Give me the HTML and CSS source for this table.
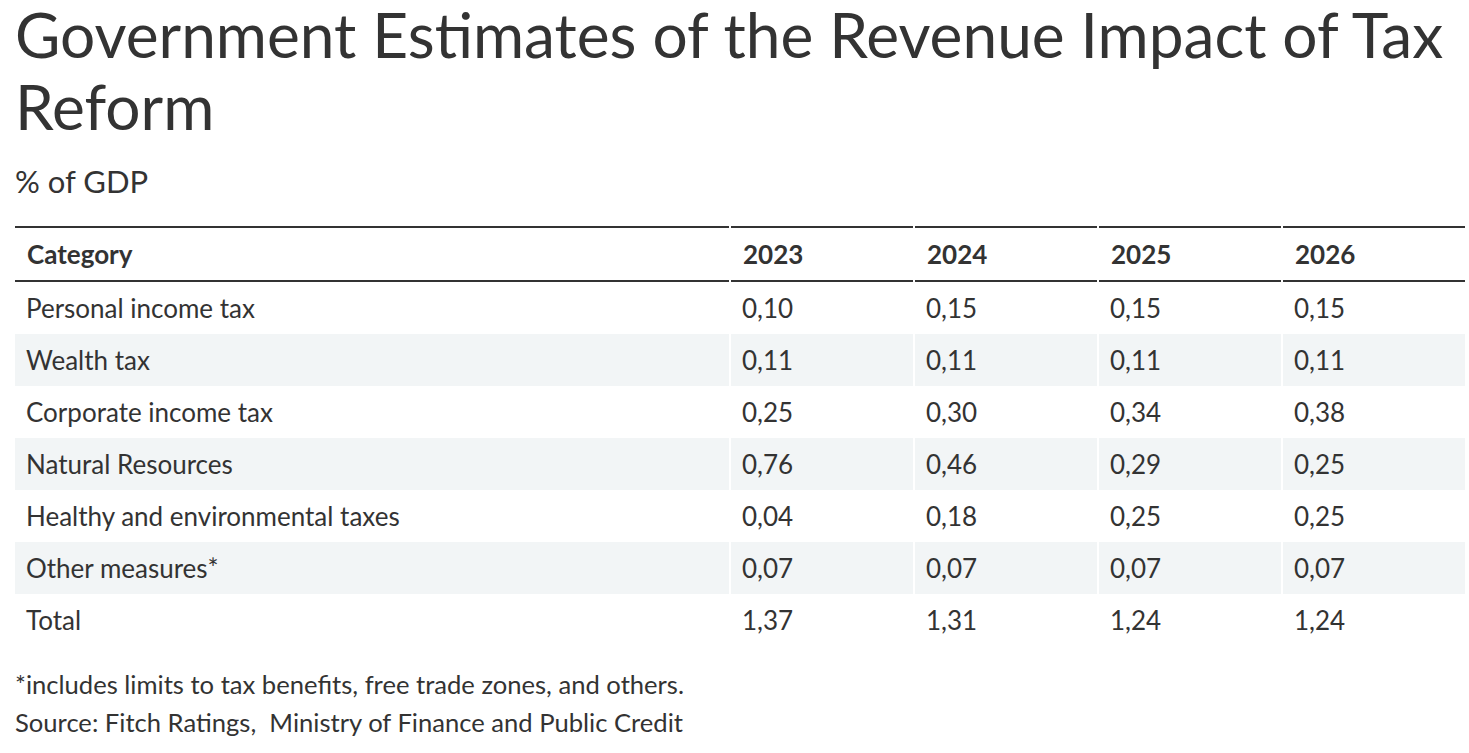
FILE: index.html
```html
<!DOCTYPE html>
<html>
<head>
<meta charset="utf-8">
<link rel="stylesheet" href="styles.css">
</head>
<body>
<div class="page">
  <h1 class="title">Government Estimates of the Revenue Impact of Tax Reform</h1>
  <p class="subtitle">% of GDP</p>
  <table class="data">
    <thead>
      <tr><th class="cat">Category</th><th>2023</th><th>2024</th><th>2025</th><th>2026</th></tr>
    </thead>
    <tbody>
      <tr><td>Personal income tax</td><td>0,10</td><td>0,15</td><td>0,15</td><td>0,15</td></tr>
      <tr><td>Wealth tax</td><td>0,11</td><td>0,11</td><td>0,11</td><td>0,11</td></tr>
      <tr><td>Corporate income tax</td><td>0,25</td><td>0,30</td><td>0,34</td><td>0,38</td></tr>
      <tr><td>Natural Resources</td><td>0,76</td><td>0,46</td><td>0,29</td><td>0,25</td></tr>
      <tr><td>Healthy and environmental taxes</td><td>0,04</td><td>0,18</td><td>0,25</td><td>0,25</td></tr>
      <tr><td>Other measures*</td><td>0,07</td><td>0,07</td><td>0,07</td><td>0,07</td></tr>
      <tr><td>Total</td><td>1,37</td><td>1,31</td><td>1,24</td><td>1,24</td></tr>
    </tbody>
  </table>
  <div class="notes">
    <p>*includes limits to tax benefits, free trade zones, and others.</p>
    <p>Source: Fitch Ratings,&nbsp; Ministry of Finance and Public Credit</p>
  </div>
</div>
</body>
</html>
```
FILE: styles.css
```css
html, body {
  margin: 0;
  padding: 0;
  background: #ffffff;
}
body {
  font-family: Lato, "Open Sans", sans-serif;
  color: #333333;
}
.page {
  padding: 0 4px 0 15px;
}
.title {
  margin: -2px 0 0 0;
  font-size: 62.2px;
  line-height: 72px;
  font-weight: 400;
  color: #333333;
}
.subtitle {
  margin: 19px 0 0 0;
  font-size: 31px;
  line-height: 40px;
}
.data {
  margin-top: 25px;
  margin-left: -2px;
  width: calc(100% + 4px);
  border-collapse: separate;
  border-spacing: 2px 0;
  font-size: 26px;
}
.data th {
  text-align: left;
  font-weight: 700;
  height: 52px;
  padding: 0 12px;
  border-top: 2px solid #333333;
  border-bottom: 2px solid #333333;
  vertical-align: middle;
}
.data th.cat {
  width: 690px;
}
.data td {
  height: 52px;
  padding: 0 11px;
  vertical-align: middle;
}
.data tbody tr:nth-child(even) td {
  background: #f2f5f6;
}
.notes {
  margin-top: 19px;
  font-size: 25.6px;
}
.notes p {
  margin: 0;
  line-height: 38px;
}
```
